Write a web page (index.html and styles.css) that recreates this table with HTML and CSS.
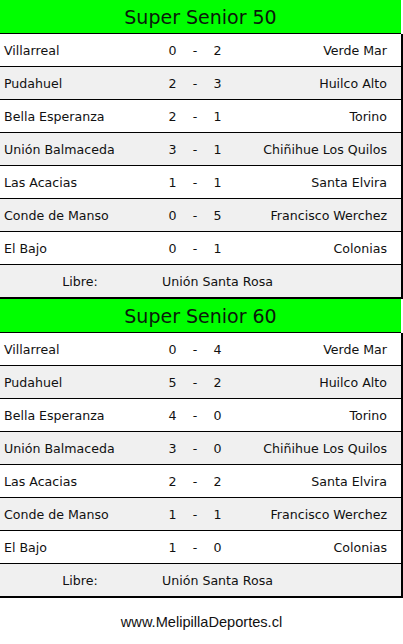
FILE: index.html
```html
<!DOCTYPE html>
<html lang="es">
<head>
<meta charset="utf-8">
<title>Super Senior</title>
<link rel="stylesheet" href="styles.css">
</head>
<body>
<div class="page">
  <section class="group">
    <div class="title">Super Senior 50</div>
    <div class="match"><span class="home">Villarreal</span><span class="g">0</span><span class="sep">-</span><span class="g">2</span><span class="away">Verde Mar</span></div>
    <div class="match alt"><span class="home">Pudahuel</span><span class="g">2</span><span class="sep">-</span><span class="g">3</span><span class="away">Huilco Alto</span></div>
    <div class="match"><span class="home">Bella Esperanza</span><span class="g">2</span><span class="sep">-</span><span class="g">1</span><span class="away">Torino</span></div>
    <div class="match alt"><span class="home">Unión Balmaceda</span><span class="g">3</span><span class="sep">-</span><span class="g">1</span><span class="away">Chiñihue Los Quilos</span></div>
    <div class="match"><span class="home">Las Acacias</span><span class="g">1</span><span class="sep">-</span><span class="g">1</span><span class="away">Santa Elvira</span></div>
    <div class="match alt"><span class="home">Conde de Manso</span><span class="g">0</span><span class="sep">-</span><span class="g">5</span><span class="away">Francisco Werchez</span></div>
    <div class="match"><span class="home">El Bajo</span><span class="g">0</span><span class="sep">-</span><span class="g">1</span><span class="away">Colonias</span></div>
    <div class="match alt last"><span class="libre">Libre:</span><span class="free">Unión Santa Rosa</span></div>
  </section>
  <section class="group">
    <div class="title">Super Senior 60</div>
    <div class="match"><span class="home">Villarreal</span><span class="g">0</span><span class="sep">-</span><span class="g">4</span><span class="away">Verde Mar</span></div>
    <div class="match alt"><span class="home">Pudahuel</span><span class="g">5</span><span class="sep">-</span><span class="g">2</span><span class="away">Huilco Alto</span></div>
    <div class="match"><span class="home">Bella Esperanza</span><span class="g">4</span><span class="sep">-</span><span class="g">0</span><span class="away">Torino</span></div>
    <div class="match alt"><span class="home">Unión Balmaceda</span><span class="g">3</span><span class="sep">-</span><span class="g">0</span><span class="away">Chiñihue Los Quilos</span></div>
    <div class="match"><span class="home">Las Acacias</span><span class="g">2</span><span class="sep">-</span><span class="g">2</span><span class="away">Santa Elvira</span></div>
    <div class="match alt"><span class="home">Conde de Manso</span><span class="g">1</span><span class="sep">-</span><span class="g">1</span><span class="away">Francisco Werchez</span></div>
    <div class="match"><span class="home">El Bajo</span><span class="g">1</span><span class="sep">-</span><span class="g">0</span><span class="away">Colonias</span></div>
    <div class="match alt last"><span class="libre">Libre:</span><span class="free">Unión Santa Rosa</span></div>
  </section>
  <div class="footer">www.MelipillaDeportes.cl</div>
</div>
</body>
</html>
```

FILE: styles.css
```css
html, body {
  margin: 0;
  padding: 0;
  background: #ffffff;
}
.page {
  width: 403px;
  font-family: "DejaVu Sans", sans-serif;
  color: #111111;
}
.title {
  width: 401px;
  height: 33px;
  background: #00ff00;
  border-bottom: 1px solid #000;
  display: flex;
  align-items: center;
  justify-content: center;
  font-size: 19px;
  color: #0a1a0a;
}
.match {
  display: grid;
  grid-template-columns: 160px 25px 20px 25px 1fr;
  align-items: center;
  height: 32px;
  width: 401px;
  border-right: 2px solid #000;
  border-bottom: 1px solid #000;
  background: #ffffff;
  font-size: 12.6px;
}
.match.alt {
  background: #f0f0f0;
}
.match.last {
  border-bottom-width: 2px;
}
.home {
  padding-left: 4px;
}
.g, .sep {
  text-align: center;
}
.away {
  text-align: right;
  padding-right: 14px;
}
.libre {
  text-align: center;
}
.free {
  grid-column: 2 / 6;
  padding-left: 2px;
}
.footer {
  padding-top: 16px;
  text-align: center;
  font-family: "Liberation Sans", Arial, sans-serif;
  font-size: 14.6px;
  color: #111;
}
```
